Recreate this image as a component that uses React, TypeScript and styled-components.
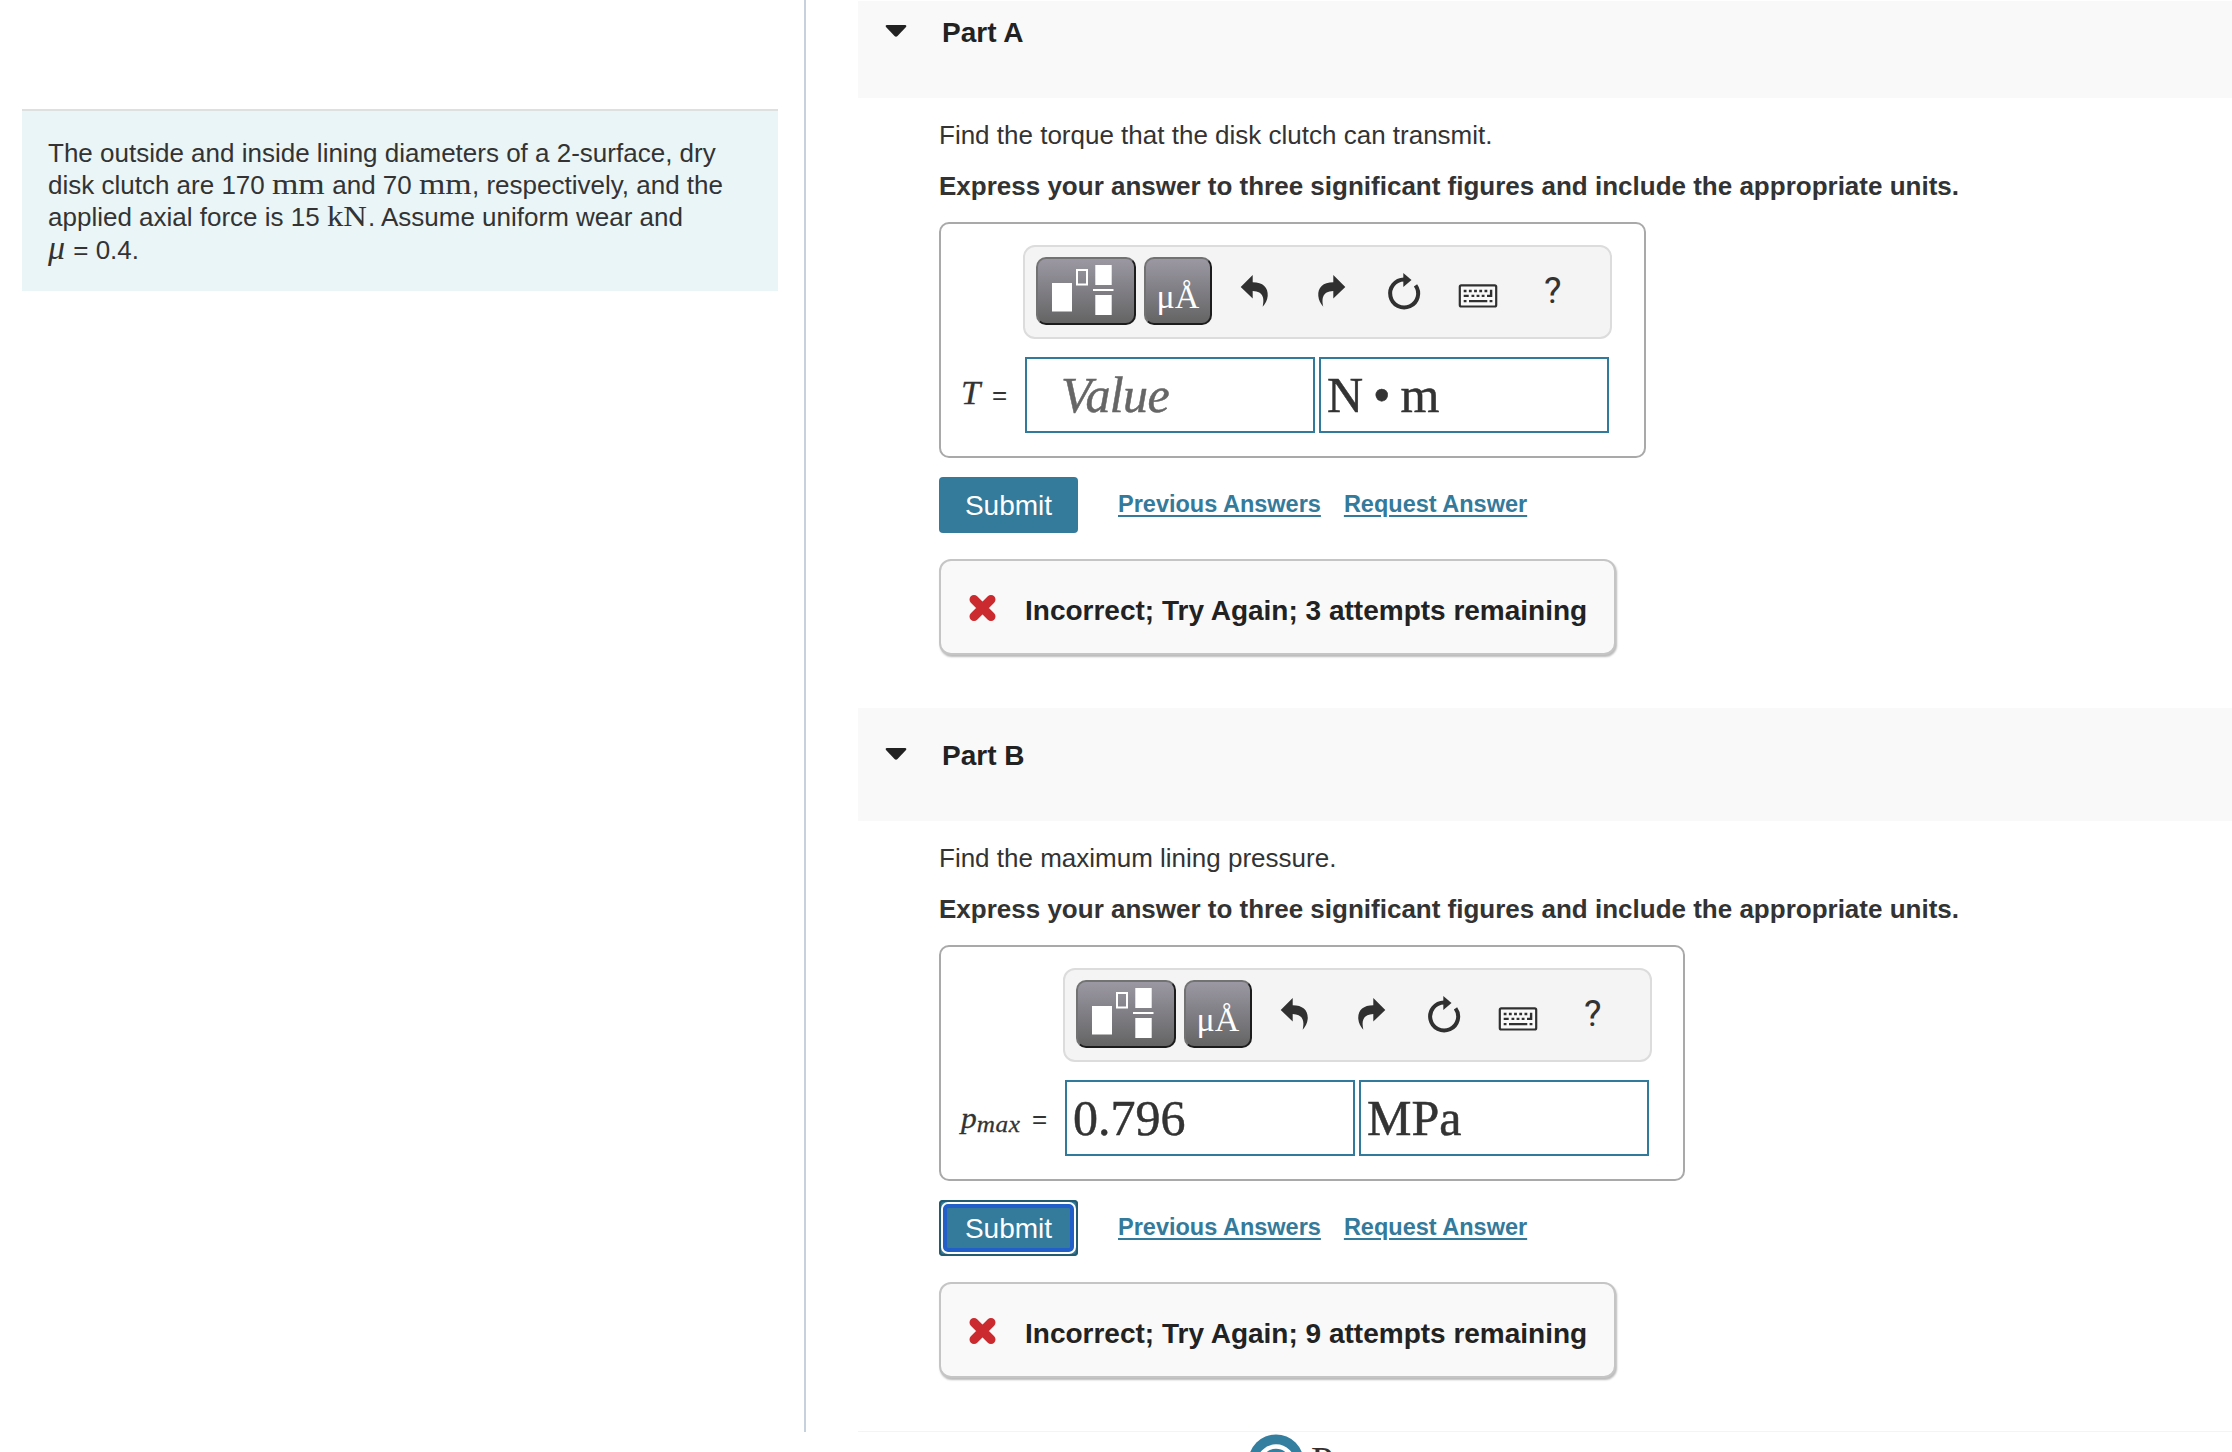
import * as React from "react";
import styled, { createGlobalStyle, css } from "styled-components";

const GlobalStyle = createGlobalStyle`
  * {
    box-sizing: border-box;
  }

  body {
    margin: 0;
    background: #fff;
    color: #333;
    font-family: "Liberation Sans", Arial, sans-serif;
    font-size: 26px;
    overflow: hidden;
  }

  p {
    margin: 0;
  }
`;

const serif = css`
  font-family: "Liberation Serif", "Times New Roman", serif;
`;

const Page = styled.div`
  display: flex;
  height: 1452px;
  overflow: hidden;
`;

const Sidebar = styled.aside`
  width: 806px;
  height: 1432px;
  padding: 109px 26px 0 22px;
  border-right: 2px solid #c6d1dd;
`;

const Problem = styled.div`
  height: 182px;
  padding: 26px 0 0 26px;
  border-top: 2px solid #dedfdf;
  background: #eaf5f7;
  line-height: 32px;
  white-space: nowrap;
`;

const Unit = styled.span<{ $width: number; $scale: number }>`
  ${serif}
  display: inline-block;
  width: ${(p) => p.$width}px;
  font-size: 30px;
  line-height: 30px;
  transform: scaleX(${(p) => p.$scale});
  transform-origin: left;
`;

const Mu = styled.i`
  ${serif}
  display: inline-block;
  width: 18px;
  font-size: 34px;
  line-height: 30px;
`;

const Content = styled.main`
  flex: 1;
  padding: 1px 0 0 52px;
`;

const PartHeader = styled.header<{ $first?: boolean }>`
  display: flex;
  align-items: flex-start;
  height: ${(p) => (p.$first ? 97 : 113)}px;
  padding: ${(p) => (p.$first ? 16 : 32)}px 0 0 27px;
  background: #f9f9f9;
  color: #222;

  svg {
    margin-top: 8px;
  }
`;

const PartTitle = styled.h2`
  margin: 0 0 0 35px;
  font-size: 28px;
  line-height: 32px;
`;

const PartBody = styled.section`
  height: 610px;
  padding: 20px 0 0 81px;
`;

const Question = styled.p`
  height: 51px;
  line-height: 34px;
`;

const Instruction = styled.p`
  height: 53px;
  font-weight: bold;
  line-height: 34px;
`;

const AnswerBox = styled.div<{ $width: number }>`
  display: flex;
  width: ${(p) => p.$width}px;
  height: 236px;
  border: 2px solid #a9a9a9;
  border-radius: 10px;
`;

const Label = styled.div<{ $width: number; $top: number }>`
  ${serif}
  width: ${(p) => p.$width}px;
  padding: ${(p) => p.$top}px 0 0 20px;
  font-size: 30px;
  line-height: 34px;
  white-space: nowrap;
`;

const Variable = styled.i<{ $width: number; $size?: number }>`
  display: inline-block;
  width: ${(p) => p.$width}px;
  font-size: ${(p) => p.$size || 30}px;
  -webkit-text-stroke: 0.3px;
  transform: scaleX(1.05);
  transform-origin: left;
`;

const Subscript = styled.span`
  position: relative;
  top: 4px;
  font-size: 24px;
  letter-spacing: 0.6px;
`;

const Equals = styled.span`
  font-family: "Liberation Sans", Arial, sans-serif;
  font-size: 26px;
`;

const Editor = styled.div`
  padding-top: 21px;
`;

const Toolbar = styled.div`
  display: flex;
  align-items: center;
  width: 589px;
  height: 94px;
  padding: 0 0 2px 11px;
  border: 2px solid #dcdcdc;
  border-radius: 12px;
  background: #f4f4f4;
`;

const ToolButton = styled.button<{ $width: number }>`
  display: flex;
  align-items: center;
  justify-content: center;
  width: ${(p) => p.$width}px;
  height: 68px;
  margin-right: 8px;
  padding: 0;
  border: 2px solid;
  border-color: #727272 #1c1c1c #1c1c1c #727272;
  border-radius: 10px;
  background: linear-gradient(#9b98a3, #646464);
`;

const UnitSymbols = styled.span`
  ${serif}
  padding-top: 11px;
  color: #fff;
  font-size: 34px;
  line-height: 40px;
`;

const Fields = styled.div`
  display: flex;
  gap: 4px;
  padding: 18px 0 0 2px;
`;

const Field = styled.div<{ $placeholder?: boolean }>`
  ${serif}
  width: 290px;
  height: 76px;
  padding-left: ${(p) => (p.$placeholder ? 34 : 6)}px;
  border: 2px solid #317a9c;
  color: ${(p) => (p.$placeholder ? "#666" : "#333")};
  font-size: 50px;
  font-style: ${(p) => (p.$placeholder ? "italic" : "normal")};
  letter-spacing: ${(p) => (p.$placeholder ? "-0.6px" : "normal")};
  line-height: 72px;
  word-spacing: -2.5px;
  white-space: pre;
  -webkit-text-stroke: 0.5px;
`;

const Actions = styled.div`
  display: flex;
  align-items: center;
  height: 56px;
  margin-top: 19px;
`;

const Submit = styled.button<{ $focused?: boolean }>`
  position: relative;
  width: 139px;
  height: 56px;
  margin-right: 40px;
  padding: 2px 0 0;
  border: 0;
  border-radius: 4px;
  background: #347a9b;
  color: #fff;
  font: 28px "Liberation Sans", Arial, sans-serif;

  ${(p) =>
    p.$focused &&
    css`
      box-shadow: inset 0 0 0 2px #245b70;

      &::after {
        content: "";
        position: absolute;
        inset: 2px;
        border: 2px solid #fff;
        border-radius: 7px;
        box-shadow: inset 0 0 0 4px #225fc9;
      }
    `}
`;

const ActionLink = styled.a`
  margin: -1px 23px 0 0;
  color: #347a9b;
  font-size: 23.5px;
  font-weight: bold;
  text-decoration: underline;
  text-decoration-thickness: 2px;
  text-underline-offset: 3px;
`;

const Feedback = styled.div`
  display: flex;
  align-items: center;
  width: 677px;
  height: 96px;
  margin-top: 26px;
  padding: 7px 0 0 27px;
  border: 2px solid #c5c5c5;
  border-radius: 12px;
  background: #f9f9f9;
  box-shadow: 1px 2px 2px #bbb;
  color: #222;
  font-size: 28px;
  font-weight: bold;
  white-space: nowrap;

  svg {
    margin: -6px 28px 0 0;
  }
`;

const Footer = styled.footer`
  display: flex;
  height: 21px;
  padding: 2px 0 0 390px;
  border-top: 1px solid #f4f4f4;
`;

const Brand = styled.span`
  ${serif}
  margin: 7px 0 0 7px;
  color: #38302c;
  font-size: 40px;
  line-height: 40px;
`;

const Caret = () => (
  <svg width="22" height="12" viewBox="0 0 22 12">
    <path d="M2 0H20Q22 0 21 2L12.5 11Q11 12.5 9.5 11L1 2Q0 0 2 0Z" fill="#222" />
  </svg>
);

const TemplateIcon = () => (
  <svg width="68" height="52" viewBox="0 0 68 52">
    <path d="M0 18H20V46.5H0ZM43.3 0H59.7V20H43.3ZM41 24H61.5V26H41ZM43.3 30H59.7V50H43.3Z" fill="#fff" />
    <path d="M25 5H35V19.5H25Z" fill="none" stroke="#fff" strokeWidth="2" />
  </svg>
);

const IconStrip = styled.svg`
  flex: none;
  margin-left: 16px;
`;

const ToolIcons = () => (
  <IconStrip width="330" height="44" viewBox="1236 269 330 44" fill="#303030">
    <path d="M1240.7 287 1252.7 275V282.3C1263 282.3 1268.3 287.5 1267.7 296C1267.3 300 1265.5 303.5 1262.7 306.7C1264.3 299 1264 291.5 1252.7 291V298.5Z" />
    <path d="M1345.3 287 1333.3 275V282.3C1323 282.3 1317.7 287.5 1318.3 296C1318.7 300 1320.5 303.5 1323.3 306.7C1321.7 299 1322 291.5 1333.3 291V298.5Z" />
    <path d="M1404 279.5A14 14 0 1 0 1415.5 285.3" fill="none" stroke="#303030" strokeWidth="4" />
    <path d="M1403.3 273 1411.5 280 1403.3 287Z" />
    <rect x="1459.8" y="285.3" width="36.4" height="21.2" rx="1.5" fill="#f9f9f9" stroke="#303030" strokeWidth="2.2" />
    <g fill="none" stroke="#303030" strokeWidth="2.4">
      <path d="M1463.7 291H1488" strokeDasharray="2.8 2.4" />
      <path d="M1463.7 295.9H1468.7M1471.5 295.9H1474.3M1476.6 295.9H1479.4M1481.7 295.9H1484.5M1487 295.9H1491.1V289.7" />
      <path d="M1463.7 301.1H1466.5M1469 301.1H1487.3M1489.6 301.1H1492.4" />
    </g>
  </IconStrip>
);

const Help = styled.span`
  margin-left: -22px;
  font-family: Roboto, sans-serif;
  font-size: 37px;
  line-height: 40px;
`;

const CrossIcon = () => (
  <svg width="29" height="28" viewBox="0 0 29 28">
    <path d="M6 5.5 23 22.5M23 5.5 6 22.5" stroke="#cb2a2e" strokeWidth="9" strokeLinecap="round" />
  </svg>
);

const PearsonLogo = () => (
  <svg width="56" height="56" viewBox="0 0 56 56">
    <circle cx="28" cy="28" r="27.6" fill="#347f9f" />
    <circle cx="28" cy="29.5" r="17" fill="none" stroke="#fff" strokeWidth="4.5" />
  </svg>
);

type PartProps = {
  title: string;
  question: string;
  label: React.ReactNode;
  labelWidth: number;
  labelTop: number;
  boxWidth: number;
  value?: string;
  unit: string;
  attempts: number;
  first?: boolean;
};

const Part = ({ title, question, label, labelWidth, labelTop, boxWidth, value, unit, attempts, first }: PartProps) => (
  <>
    <PartHeader $first={first}>
      <Caret />
      <PartTitle>{title}</PartTitle>
    </PartHeader>
    <PartBody>
      <Question>{question}</Question>
      <Instruction>Express your answer to three significant figures and include the appropriate units.</Instruction>
      <AnswerBox $width={boxWidth}>
        <Label $width={labelWidth} $top={labelTop}>{label}</Label>
        <Editor>
          <Toolbar>
            <ToolButton $width={100}><TemplateIcon /></ToolButton>
            <ToolButton $width={68}><UnitSymbols>μÅ</UnitSymbols></ToolButton>
            <ToolIcons />
            <Help>?</Help>
          </Toolbar>
          <Fields>
            <Field $placeholder={!value}>{value || "Value"}</Field>
            <Field>{unit}</Field>
          </Fields>
        </Editor>
      </AnswerBox>
      <Actions>
        <Submit $focused={!first}>Submit</Submit>
        <ActionLink>Previous Answers</ActionLink>
        <ActionLink>Request Answer</ActionLink>
      </Actions>
      <Feedback>
        <CrossIcon />
        Incorrect; Try Again; {attempts} attempts remaining
      </Feedback>
    </PartBody>
  </>
);

const App = () => (
  <>
    <GlobalStyle />
    <Page>
      <Sidebar>
        <Problem>
          The outside and inside lining diameters of a 2-surface, dry<br />
          disk clutch are 170 <Unit $width={53} $scale={1.13}>mm</Unit> and 70 <Unit $width={53} $scale={1.13}>mm</Unit>, respectively, and the<br />
          applied axial force is 15 <Unit $width={41} $scale={1.09}>kN</Unit>. Assume uniform wear and<br />
          <Mu>μ</Mu> = 0.4.
        </Problem>
      </Sidebar>
      <Content>
        <Part
          first
          title="Part A"
          question="Find the torque that the disk clutch can transmit."
          label={<><Variable $width={31} $size={33}>T</Variable><Equals>=</Equals></>}
          labelWidth={82}
          labelTop={152}
          boxWidth={707}
          unit="N • m"
          attempts={3}
        />
        <Part
          title="Part B"
          question="Find the maximum lining pressure."
          label={<><Variable $width={71}>p<Subscript>max</Subscript></Variable><Equals>=</Equals></>}
          labelWidth={122}
          labelTop={154}
          boxWidth={746}
          value="0.796"
          unit="MPa"
          attempts={9}
        />
        <Footer>
          <PearsonLogo />
          <Brand>P</Brand>
        </Footer>
      </Content>
    </Page>
  </>
);

export default App;
